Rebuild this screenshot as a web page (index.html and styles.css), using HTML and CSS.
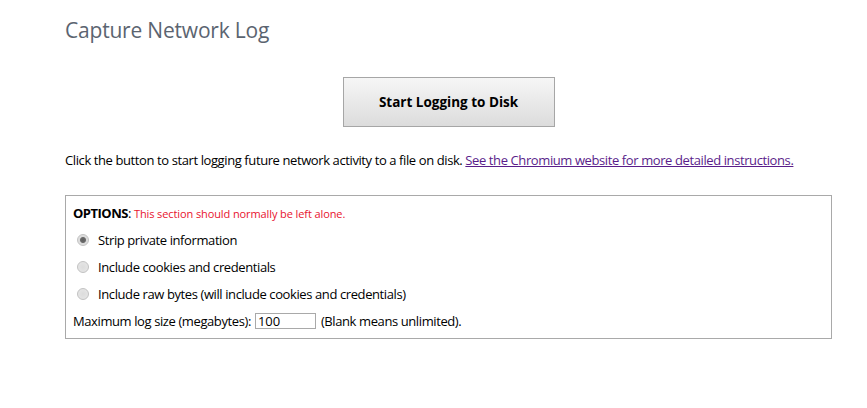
FILE: index.html
```html
<!DOCTYPE html>
<html>
<head>
<meta charset="utf-8">
<title>Capture Network Log</title>
<link rel="stylesheet" href="styles.css">
</head>
<body>
<main class="page">
  <h1 class="title">Capture Network Log</h1>
  <div class="start-row">
    <button class="start-btn" type="button">Start Logging to Disk</button>
  </div>
  <p class="intro">Click the button to start logging future network activity to a file on disk. <a class="link" href="#">See the Chromium website for more detailed instructions.</a></p>
  <section class="options">
    <div class="opt-head"><b class="opt-label">OPTIONS</b>: <span class="warn">This section should normally be left alone.</span></div>
    <label class="opt-row first"><input class="radio" type="radio" name="mode" checked> Strip private information</label>
    <label class="opt-row"><input class="radio" type="radio" name="mode"> Include cookies and credentials</label>
    <label class="opt-row"><input class="radio" type="radio" name="mode"> Include raw bytes (will include cookies and credentials)</label>
    <div class="opt-row">Maximum log size (megabytes):<input class="size" type="text" value="100">(Blank means unlimited).</div>
  </section>
</main>
</body>
</html>
```
FILE: styles.css
```css
html, body {
  margin: 0;
  padding: 0;
  background: #ffffff;
}
body {
  font-family: "Open Sans", "Noto Sans", sans-serif;
  font-size: 13px;
  letter-spacing: -0.4px;
  color: #000;
}
.page {
  padding: 14px 35px 0 65px;
}
.title {
  margin: 0;
  font-size: 21px;
  font-weight: 400;
  letter-spacing: -0.2px;
  color: #5b6470;
  line-height: 32px;
}
.start-row {
  display: flex;
  justify-content: center;
  padding-top: 31px;
}
.start-btn {
  width: 212px;
  height: 50px;
  border: 1px solid #a6a6a6;
  background: linear-gradient(#f6f6f6, #dcdcdc);
  font-family: inherit;
  font-size: 13.5px;
  font-weight: 700;
  letter-spacing: 0;
  color: #000;
}
.intro {
  margin: 23px 0 0 0;
  line-height: 20px;
}
.link {
  color: #5a1d8a;
  text-decoration: underline;
}
.options {
  margin-top: 25px;
  border: 1px solid #a9a9a9;
  padding: 7px 7px 7px 7px;
  height: 128px;
}
.opt-head {
  line-height: 20px;
}
.opt-label {
  letter-spacing: -0.5px;
}
.warn {
  color: #e8122e;
  font-size: 11px;
  letter-spacing: -0.1px;
}
.opt-row {
  display: flex;
  align-items: center;
  height: 27px;
}
.opt-row.first {
  margin-top: 2px;
}
.radio {
  appearance: none;
  -webkit-appearance: none;
  width: 12px;
  height: 12px;
  margin: 0 9px 0 4px;
  border: 1px solid #c2c2c2;
  border-radius: 50%;
  background: radial-gradient(circle, #dcdcdc 0%, #e8e8e8 100%);
}
.radio:checked {
  background: radial-gradient(circle, #5e5e5e 0, #6a6a6a 2.5px, #dadada 3.5px, #e8e8e8 100%);
}
.size {
  width: 55px;
  height: 12px;
  border: 1px solid #a9a9a9;
  padding: 1px 2px;
  font-family: inherit;
  font-size: 13px;
  letter-spacing: 0;
  color: #000;
  margin: 0 5px 0 4px;
}
```
